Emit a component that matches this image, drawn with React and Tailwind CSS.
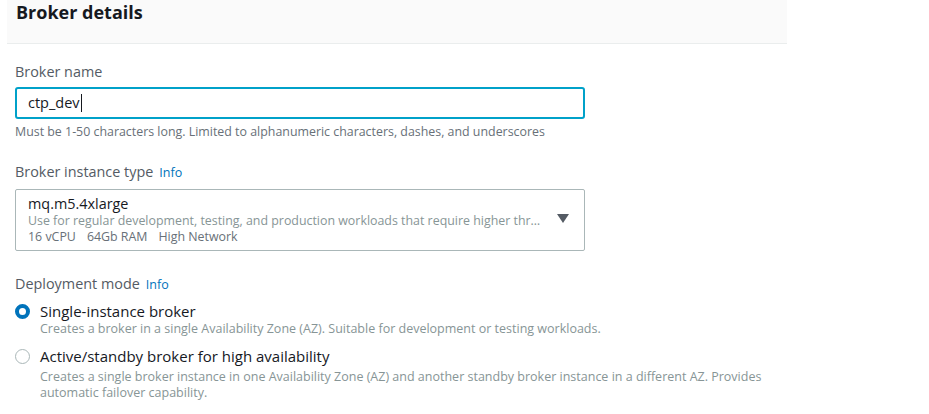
import React from 'react';

const font = { fontFamily: '"Open Sans", "Noto Sans", Arial, sans-serif' };

const InfoLink = () => <span className="ml-[6px] text-[12.5px] font-medium text-[#0073bb]">Info</span>;

const App = () => {
  return (
    <div className="h-[414px] w-[929px] overflow-hidden bg-white" style={font}>
      <div className="ml-[7px] w-[780px]">
        {/* Header */}
        <div className="h-[44px] border-b border-[#eaeded] bg-[#fafafa] pl-[9px]">
          <h2 className="text-[18px] font-bold leading-[24px] text-[#16191f]">Broker details</h2>
        </div>

        <div className="pl-[8px] pt-[18px]">
          {/* Broker name */}
          <label className="block text-[14.4px] leading-[20px] text-[#545b64]">Broker name</label>
          <div className="mt-[5px] flex h-[32px] w-[570px] items-center rounded-[3px] border-2 border-[#00a1c9] pl-[11px] text-[14.5px] text-[#16191f]">
            ctp_dev<span className="ml-[1px] h-[18px] w-[1px] bg-[#16191f]" />
          </div>
          <p className="mt-[5px] text-[12.4px] leading-[16px] text-[#687078]">
            Must be 1-50 characters long. Limited to alphanumeric characters, dashes, and underscores
          </p>

          {/* Broker instance type */}
          <div className="mt-[22px] flex items-baseline text-[14.4px] leading-[20px] text-[#545b64]">
            Broker instance type <InfoLink />
          </div>
          <div className="mt-[6px] flex h-[62px] w-[570px] items-center rounded-[2px] border border-[#aab7b8] pl-[12px] pr-[15px]">
            <div className="min-w-0 flex-1">
              <div className="text-[14.4px] leading-[18px] text-[#16191f]">mq.m5.4xlarge</div>
              <div className="truncate pr-[12px] text-[12.4px] leading-[16px] text-[#879596]">
                Use for regular development, testing, and production workloads that require higher throughput and availability
              </div>
              <div className="flex gap-[11px] text-[12.4px] leading-[16px] text-[#687078]">
                <span>16 vCPU</span>
                <span>64Gb RAM</span>
                <span>High Network</span>
              </div>
            </div>
            <svg width="12" height="10" viewBox="0 0 12 10" className="mb-[2px]">
              <path d="M0 0 L12 0 L6 9 Z" fill="#545b64" />
            </svg>
          </div>

          {/* Deployment mode */}
          <div className="mt-[23px] flex items-baseline text-[14.4px] leading-[20px] text-[#545b64]">
            Deployment mode <InfoLink />
          </div>
          <div className="mt-[6px] flex flex-col gap-[9px]">
            <div className="flex items-start">
              <div className="mt-[3px] flex h-[15px] w-[15px] shrink-0 items-center justify-center rounded-full border-[4px] border-[#0073bb] bg-white" />
              <div className="ml-[10px]">
                <div className="text-[15px] leading-[20px] text-[#16191f]">Single-instance broker</div>
                <div className="text-[12.5px] leading-[16px] text-[#879596]">
                  Creates a broker in a single Availability Zone (AZ). Suitable for development or testing workloads.
                </div>
              </div>
            </div>
            <div className="flex items-start">
              <div className="mt-[3px] h-[15px] w-[15px] shrink-0 rounded-full border border-[#aab7b8] bg-white" />
              <div className="ml-[10px]">
                <div className="text-[15px] leading-[20px] text-[#16191f]">Active/standby broker for high availability</div>
                <div className="mt-[3px] w-[740px] text-[12.5px] leading-[16px] text-[#879596]">
                  Creates a single broker instance in one Availability Zone (AZ) and another standby broker instance in a different AZ. Provides automatic failover capability.
                </div>
              </div>
            </div>
          </div>
        </div>
      </div>
    </div>
  );
};

export default App;
